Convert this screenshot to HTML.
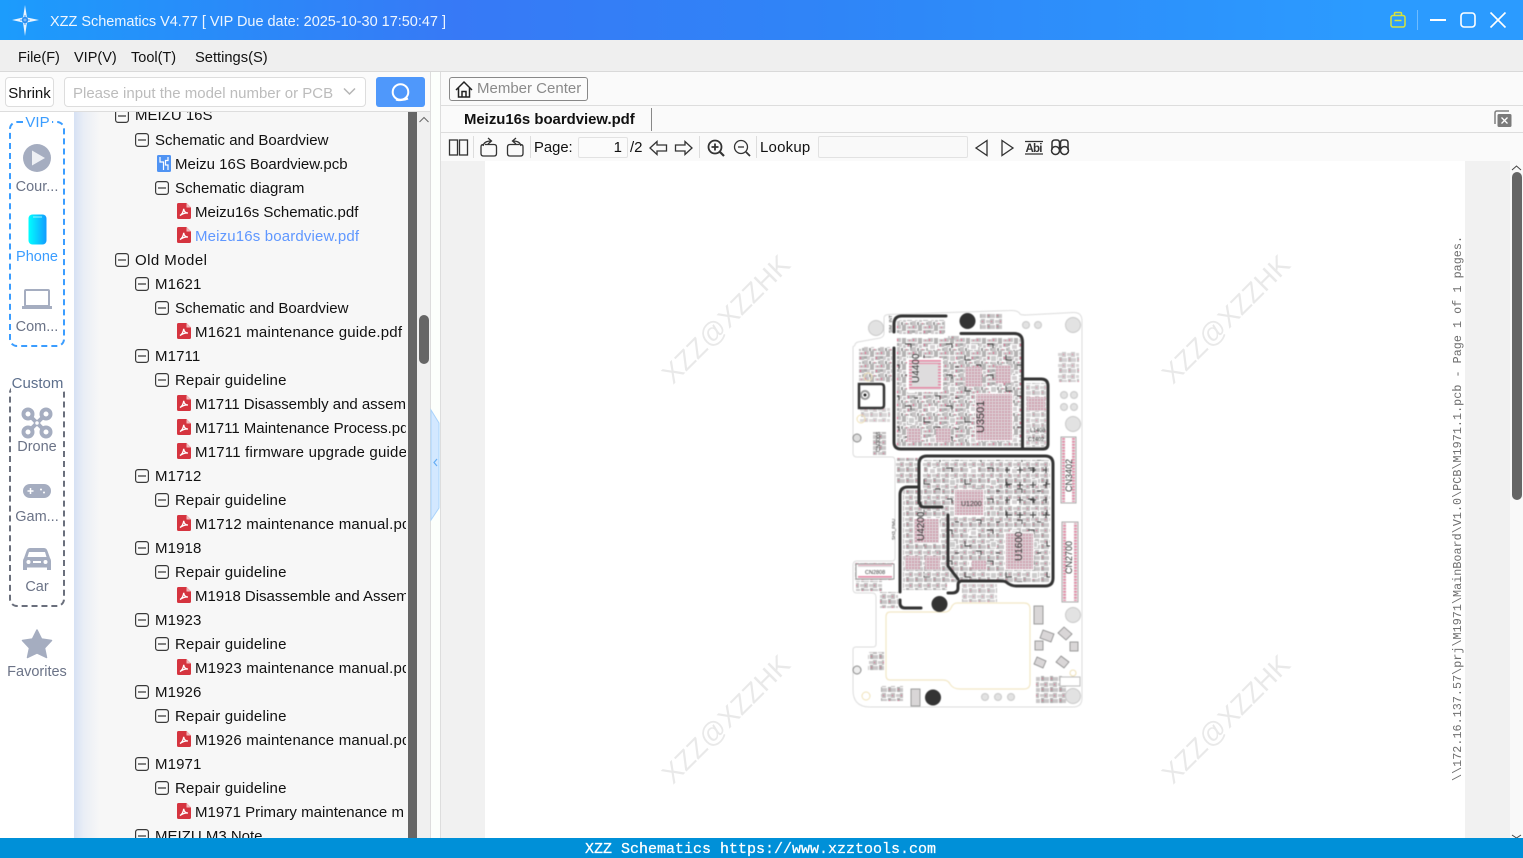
<!DOCTYPE html>
<html><head><meta charset="utf-8"><title>XZZ Schematics</title>
<style>
html,body{margin:0;padding:0;width:1523px;height:858px;overflow:hidden;background:#fff}
body{position:relative;font:15px/20px "Liberation Sans",sans-serif;color:#111}
.a{position:absolute;white-space:nowrap}
.t{position:absolute;white-space:nowrap;height:24px;line-height:24px;font-size:15px;margin-top:1px;color:#111}
.s{position:absolute;left:0;width:74px;text-align:center;font-size:14.500px;color:#6b7387;line-height:18px;margin-top:1px}
svg{position:absolute;left:0;top:0;overflow:hidden}
</style></head><body>
<div class="a" style="left:0;top:0;width:1523px;height:40px;background:linear-gradient(90deg,#1c9cfc 0,#3779f6 30%,#2f85f7 55%,#2b9bff 90%)"></div>
<div class="a" style="left:50px;top:12px;font-size:14.500px;line-height:20px;color:#eef6ff;letter-spacing:-.02px">XZZ Schematics V4.77 [ VIP Due date: 2025-10-30 17:50:47 ]</div>
<div class="a" style="left:0;top:40px;width:1523px;height:31px;background:#efefef;border-bottom:1px solid #d9d9d9"></div>
<div class="a" style="left:18px;top:48px;font-size:14.500px">File(F)</div><div class="a" style="left:74px;top:48px;font-size:14.500px">VIP(V)</div><div class="a" style="left:131px;top:48px;font-size:14.500px">Tool(T)</div><div class="a" style="left:195px;top:48px;font-size:14.700px">Settings(S)</div>

<!-- left toolbar -->
<div class="a" style="left:0;top:72px;width:430px;height:39px;background:#fbfbfb;border-bottom:1px solid #ddd"></div>
<div class="a" style="left:5px;top:77px;width:47px;height:28px;background:#fff;border:1px solid #ddd;border-radius:4px;text-align:center;line-height:31px;font-size:15px">Shrink</div>
<div class="a" style="left:64px;top:77px;width:300px;height:28px;background:#fff;border:1px solid #ddd;border-radius:4px;line-height:31px;color:#bcbcbc;text-indent:8px;font-size:15px">Please input the model number or PCB</div>
<div class="a" style="left:376px;top:77px;width:49px;height:30px;background:#4f98fb;border-radius:3px"></div>

<!-- tree panel -->
<div class="a" style="left:74px;top:112px;width:334px;height:726px;background:linear-gradient(90deg,#d6e1f4 0,#eaeef6 10px,#f7f7f7 26px)"></div>
<div class="a" style="left:408px;top:112px;width:9px;height:726px;background:#666"></div>
<div class="a" style="left:417px;top:112px;width:13px;height:726px;background:#f0f0f0"></div>
<div class="a" style="left:419px;top:315px;width:10px;height:49px;background:#666;border-radius:5px"></div>
<div class="a" style="left:430px;top:72px;width:9px;height:766px;background:#fcfffc;border-left:1px solid #ddd;border-right:1px solid #ddd"></div>
<div id="tree" class="a" style="left:0;top:112px;width:406px;height:726px;overflow:hidden">
<div class="t" style="left:135px;top:-9px">MEIZU 16S</div>
<div class="t" style="left:155px;top:16px">Schematic and Boardview</div>
<div class="t" style="left:175px;top:40px">Meizu 16S Boardview.pcb</div>
<div class="t" style="left:175px;top:64px;letter-spacing:.06px">Schematic diagram</div>
<div class="t" style="left:195px;top:88px">Meizu16s Schematic.pdf</div>
<div class="t" style="left:195px;top:112px;color:#5f97ff;letter-spacing:.15px">Meizu16s boardview.pdf</div>
<div class="t" style="left:135px;top:136px;letter-spacing:.45px">Old Model</div>
<div class="t" style="left:155px;top:160px;letter-spacing:.12px">M1621</div>
<div class="t" style="left:175px;top:184px">Schematic and Boardview</div>
<div class="t" style="left:195px;top:208px;letter-spacing:.2px">M1621 maintenance guide.pdf</div>
<div class="t" style="left:155px;top:232px;letter-spacing:.12px">M1711</div>
<div class="t" style="left:175px;top:256px;letter-spacing:.2px">Repair guideline</div>
<div class="t" style="left:195px;top:280px;letter-spacing:-.02px">M1711 Disassembly and assembly</div>
<div class="t" style="left:195px;top:304px;letter-spacing:-.02px">M1711 Maintenance Process.pdf</div>
<div class="t" style="left:195px;top:328px;letter-spacing:.2px">M1711 firmware upgrade guide.pdf</div>
<div class="t" style="left:155px;top:352px;letter-spacing:.12px">M1712</div>
<div class="t" style="left:175px;top:376px;letter-spacing:.2px">Repair guideline</div>
<div class="t" style="left:195px;top:400px;letter-spacing:.2px">M1712 maintenance manual.pdf</div>
<div class="t" style="left:155px;top:424px;letter-spacing:.12px">M1918</div>
<div class="t" style="left:175px;top:448px;letter-spacing:.2px">Repair guideline</div>
<div class="t" style="left:195px;top:472px;letter-spacing:-.02px">M1918 Disassemble and Assem</div>
<div class="t" style="left:155px;top:496px;letter-spacing:.12px">M1923</div>
<div class="t" style="left:175px;top:520px;letter-spacing:.2px">Repair guideline</div>
<div class="t" style="left:195px;top:544px;letter-spacing:.2px">M1923 maintenance manual.pdf</div>
<div class="t" style="left:155px;top:568px;letter-spacing:.12px">M1926</div>
<div class="t" style="left:175px;top:592px;letter-spacing:.2px">Repair guideline</div>
<div class="t" style="left:195px;top:616px;letter-spacing:.2px">M1926 maintenance manual.pdf</div>
<div class="t" style="left:155px;top:640px;letter-spacing:.12px">M1971</div>
<div class="t" style="left:175px;top:664px;letter-spacing:.2px">Repair guideline</div>
<div class="t" style="left:195px;top:688px;letter-spacing:.02px">M1971 Primary maintenance m</div>
<div class="t" style="left:155px;top:712px">MEIZU M3 Note</div>
</div>

<!-- sidebar labels -->
<div class="a" style="left:9px;top:121px;width:52px;height:222px;border:2px dashed #3b9dff;border-radius:8px"></div>
<div class="a" style="left:23px;top:114px;width:29px;height:17px;background:#fff;text-align:center;color:#3b9dff;font-size:15px;line-height:17px">VIP</div>
<div class="s" style="top:177px">Cour...</div>
<div class="s" style="top:247px;color:#3b9dff">Phone</div>
<div class="s" style="top:317px">Com...</div>
<div class="a" style="left:9px;top:385px;width:52px;height:218px;border:2px dashed #6a6f7c;border-radius:8px"></div>
<div class="a" style="left:11px;top:375px;width:53px;height:16px;background:#fff;text-align:center;color:#5d6f8c;font-size:15px;line-height:17px">Custom</div>
<div class="s" style="top:437px">Drone</div>
<div class="s" style="top:507px">Gam...</div>
<div class="s" style="top:577px">Car</div>
<div class="s" style="top:662px">Favorites</div>

<!-- right panel -->
<div class="a" style="left:441px;top:72px;width:1082px;height:33px;background:#fafafa;border-bottom:1px solid #ddd"></div>
<div class="a" style="left:441px;top:106px;width:1082px;height:26px;background:#fafafa;border-bottom:1px solid #ddd"></div>
<div class="a" style="left:441px;top:133px;width:1082px;height:28px;background:#fafafa"></div>
<div class="a" style="left:449px;top:77px;width:137px;height:22px;border:1px solid #888;border-radius:3px;background:#fbfbfb"></div>
<div class="a" style="left:477px;top:79px;color:#8a8a8a;font-size:15px">Member Center</div>
<div class="a" style="left:464px;top:110px;font-weight:bold;font-size:14.900px;color:#111">Meizu16s boardview.pdf</div>
<div class="a" style="left:651px;top:108px;width:1px;height:23px;background:#888"></div>
<div class="a" style="left:534px;top:138px;font-size:14.800px">Page:</div>
<div class="a" style="left:578px;top:137px;width:48px;height:19px;border:1px solid #e2e2e2;border-radius:2px;background:#fbfbfb;text-align:right;line-height:20px;font-size:15px"><span style="margin-right:5px">1</span></div>
<div class="a" style="left:630px;top:138px;font-size:15px">/2</div>
<div class="a" style="left:760px;top:138px;font-size:15px;letter-spacing:.2px">Lookup</div>
<div class="a" style="left:818px;top:136px;width:148px;height:20px;border:1px solid #e2e2e2;border-radius:2px;background:#f9f9f9"></div>
<div class="a" style="left:473px;top:136px;width:1px;height:22px;background:#ddd"></div>
<div class="a" style="left:530px;top:136px;width:1px;height:22px;background:#ddd"></div>
<div class="a" style="left:699px;top:136px;width:1px;height:22px;background:#ddd"></div>
<div class="a" style="left:756px;top:136px;width:1px;height:22px;background:#ddd"></div>
<div class="a" style="left:441px;top:161px;width:1069px;height:677px;background:#f1f1f1"></div>
<div class="a" style="left:485px;top:161px;width:980px;height:677px;background:#fff"></div>
<div class="a" style="left:1510px;top:161px;width:13px;height:677px;background:#f9f9f9"></div>
<div class="a" style="left:1512px;top:172px;width:10px;height:328px;background:#666;border-radius:5px"></div>

<!-- icons, document -->
<svg width="1523" height="858" viewBox="0 0 1523 858">
<defs>
<clipPath id="tc"><rect x="74" y="112" width="334" height="726"/></clipPath>
<pattern id="p1" width="16" height="13" patternUnits="userSpaceOnUse">
<rect x="0" y="0" width="5" height="4" fill="#c2bfc0"/><rect x="1" y="1" width="1" height="2" fill="#e8698e"/><rect x="6" y="0" width="4" height="6" fill="#b4b3b3"/><rect x="11" y="1" width="5" height="3" fill="#cbc8c9"/><rect x="13" y="2" width="1" height="1" fill="#e8698e"/><rect x="0" y="5" width="3" height="3" fill="#aaa"/><rect x="3" y="5" width="3" height="4" fill="#cfcccd"/><rect x="11" y="5" width="5" height="4" fill="#b9b7b8"/><rect x="12" y="6" width="1" height="2" fill="#e8698e"/><rect x="7" y="7" width="3" height="3" fill="#c8c6c7"/><rect x="0" y="9" width="4" height="4" fill="#c6c3c4"/><rect x="5" y="10" width="2" height="3" fill="#999"/><rect x="8" y="11" width="5" height="2" fill="#bdbbbc"/><rect x="10" y="11" width="1" height="1" fill="#e8698e"/><rect x="14" y="10" width="2" height="3" fill="#b2b2b2"/>
</pattern>
<pattern id="p3" width="9" height="11" patternUnits="userSpaceOnUse">
<rect x="0" y="0" width="4" height="5" fill="#bfbcbd"/><rect x="1" y="2" width="1" height="1" fill="#e8698e"/><rect x="5" y="1" width="4" height="3" fill="#cdcbcc"/><rect x="0" y="6" width="5" height="4" fill="#c8c6c7"/><rect x="6" y="5" width="3" height="5" fill="#aeadad"/><rect x="7" y="7" width="1" height="1" fill="#e8698e"/>
</pattern>
<pattern id="mk" width="41" height="31" patternUnits="userSpaceOnUse">
<path d="M3 3H9V7M22 14V19H28M33 24H38V28M12 26H16" fill="none" stroke="#444" stroke-width=".9"/><rect x="26" y="3" width="9" height="6" fill="#fff"/><rect x="6" y="14" width="7" height="7" fill="#fff"/><rect x="28" y="4" width="5" height="4" fill="#d4d1d2"/><rect x="7" y="15" width="5" height="5" fill="#ccc"/>
</pattern>
<pattern id="cr" width="13" height="15" patternUnits="userSpaceOnUse"><path d="M3 5H9M6 2V8" stroke="#444" stroke-width="1"/></pattern>
<pattern id="bga" width="3" height="3" patternUnits="userSpaceOnUse"><rect width="3" height="3" fill="#dcd4d7"/><rect x="0" y="0" width="2" height="2" fill="#cf9eae"/></pattern>
<pattern id="pin" width="3" height="3" patternUnits="userSpaceOnUse"><rect width="3" height="3" fill="#ddd"/><rect x="0" y="0" width="3" height="1.600" fill="#e58aa6"/></pattern>
<symbol id="pdf" viewBox="0 0 14 16"><path d="M1.500 0H9.500L14 4.500V14.500A1.500 1.500 0 0 1 12.500 16H1.500A1.500 1.500 0 0 1 0 14.500V1.500A1.500 1.500 0 0 1 1.500 0Z" fill="#d5343f"/><path d="M9.500 0V4.500H14Z" fill="#f2b7bb"/><path d="M3 12.500C5 11.500 6.500 8.500 6.700 5.800C7 8.500 8.500 10 11 10C8.500 9.800 5.800 10.500 3 12.500Z" fill="none" stroke="#fff" stroke-width="1.300"/></symbol>
<symbol id="mn" viewBox="0 0 14 14"><rect x=".6" y=".6" width="12.800" height="12.800" rx="2.500" fill="#fafafa" stroke="#3a3a3a" stroke-width="1.200"/><path d="M3 7H11" stroke="#333" stroke-width="1.200"/></symbol>
<linearGradient id="ph" x1="0" x2="1"><stop offset="0" stop-color="#0ff"/><stop offset="1" stop-color="#129bff"/></linearGradient>
</defs>

<!-- title logo -->
<path d="M25 5L27 17.500L39 20L27 22.500L25 36L23 22.500L12 20L23 17.500Z" fill="#e8f4ff"/><circle cx="25" cy="20" r="3.200" fill="#2a8df0"/><circle cx="25" cy="20" r="1.400" fill="#fff"/><path d="M20 20H30M25 15V25" stroke="#2a8df0" stroke-width=".8"/>
<!-- window buttons -->
<g fill="none"><rect x="1391" y="15.500" width="14" height="11.500" rx="2" stroke="#d8e33a" stroke-width="1.500"/><path d="M1394.500 15.500V13.500Q1394.500 12.500 1395.500 12.500H1400.500Q1401.500 12.500 1401.500 13.500V15.500M1394.500 20.500H1401.500" stroke="#d8e33a" stroke-width="1.500"/>
<path d="M1417.500 10V30" stroke="#6fbcff"/><path d="M1430 20H1446" stroke="#fff" stroke-width="2"/><rect x="1461" y="13" width="14" height="14" rx="3" stroke="#fff" stroke-width="1.600"/><path d="M1490.500 12.500L1505.500 27.500M1505.500 12.500L1490.500 27.500" stroke="#fff" stroke-width="1.600"/></g>
<!-- search bar -->
<path d="M344 88.500L349.500 94L355 88.500" fill="none" stroke="#b5b5b5" stroke-width="1.500"/>
<circle cx="400.500" cy="92" r="7.800" fill="none" stroke="#fff" stroke-width="2"/><path d="M396 99.500Q402 101 408 98.500" fill="none" stroke="#fff" stroke-width="2.200"/>

<!-- sidebar icons -->
<circle cx="37" cy="158" r="14" fill="#a5adc0"/><path d="M32 150.500L45 158L32 165.500Z" fill="#eef0f4"/>
<rect x="28.500" y="214.500" width="18" height="30" rx="4" fill="url(#ph)"/><path d="M33 217H42" stroke="#bff" stroke-width=".8"/>
<rect x="25" y="290" width="24" height="16" rx="1" fill="none" stroke="#a5adc0" stroke-width="2"/><path d="M22 307.500H52" stroke="#a5adc0" stroke-width="3"/>
<g stroke="#a5adc0" fill="none" stroke-width="4"><circle cx="28" cy="414" r="4.500"/><circle cx="46" cy="414" r="4.500"/><circle cx="28" cy="432" r="4.500"/><circle cx="46" cy="432" r="4.500"/><path d="M31 417L43 429M43 417L31 429"/></g><circle cx="37" cy="423" r="2.500" fill="#fff" stroke="#a5adc0" stroke-width="1.500"/>
<rect x="23" y="484" width="28" height="14" rx="7" fill="#a5adc0"/><path d="M27.500 491H33.500M30.500 488V494" stroke="#fff" stroke-width="1.500"/><circle cx="41" cy="489.500" r="1" fill="#fff"/><circle cx="44" cy="492.500" r="1" fill="#fff"/>
<path d="M30 548H44Q46.500 548 47.500 551L50 558Q51 559.500 51 561V570H47V567.500H27V570H23V561Q23 559.500 24 558L26.500 551Q27.500 548 30 548Z" fill="#a5adc0"/><path d="M29 552H45L46.500 557H27.500Z" fill="#fff"/><circle cx="28.500" cy="562" r="2" fill="#fff"/><circle cx="45.500" cy="562" r="2" fill="#fff"/><path d="M33 562H41" stroke="#fff" stroke-width="2"/>
<path d="M37 630L41.500 639L51.500 640.500L44.500 648L46.500 657.500L37 653L27.500 657.500L29.500 648L22.500 640.500L32.500 639Z" fill="#a5adc0" stroke="#a5adc0" stroke-width="1.500" stroke-linejoin="round"/>

<!-- tree icons -->
<g id="tg" clip-path="url(#tc)">
<use href="#mn" x="115" y="109" width="14" height="14"/>
<use href="#mn" x="135" y="133" width="14" height="14"/>
<use href="#mn" x="155" y="181" width="14" height="14"/>
<use href="#mn" x="115" y="253" width="14" height="14"/>
<use href="#mn" x="135" y="277" width="14" height="14"/>
<use href="#mn" x="155" y="301" width="14" height="14"/>
<use href="#mn" x="135" y="349" width="14" height="14"/>
<use href="#mn" x="155" y="373" width="14" height="14"/>
<use href="#mn" x="135" y="469" width="14" height="14"/>
<use href="#mn" x="155" y="493" width="14" height="14"/>
<use href="#mn" x="135" y="541" width="14" height="14"/>
<use href="#mn" x="155" y="565" width="14" height="14"/>
<use href="#mn" x="135" y="613" width="14" height="14"/>
<use href="#mn" x="155" y="637" width="14" height="14"/>
<use href="#mn" x="135" y="685" width="14" height="14"/>
<use href="#mn" x="155" y="709" width="14" height="14"/>
<use href="#mn" x="135" y="757" width="14" height="14"/>
<use href="#mn" x="155" y="781" width="14" height="14"/>
<use href="#mn" x="135" y="829" width="14" height="14"/>
<use href="#pdf" x="177" y="203" width="14" height="16"/>
<use href="#pdf" x="177" y="227" width="14" height="16"/>
<use href="#pdf" x="177" y="323" width="14" height="16"/>
<use href="#pdf" x="177" y="395" width="14" height="16"/>
<use href="#pdf" x="177" y="419" width="14" height="16"/>
<use href="#pdf" x="177" y="443" width="14" height="16"/>
<use href="#pdf" x="177" y="515" width="14" height="16"/>
<use href="#pdf" x="177" y="587" width="14" height="16"/>
<use href="#pdf" x="177" y="659" width="14" height="16"/>
<use href="#pdf" x="177" y="731" width="14" height="16"/>
<use href="#pdf" x="177" y="803" width="14" height="16"/>
</g>
<rect x="157" y="155" width="14" height="17" rx="1.500" fill="#4f93f3"/><path d="M160 157V162H163.500V170M168 157V160.500H165.500V165H168V170" fill="none" stroke="#fff" stroke-width="1.200"/>
<path d="M419.500 122L424 117.500L428.500 122" fill="none" stroke="#666" stroke-width="1"/>
<path d="M431 410L439 423V508L431 520Z" fill="#d3e8ff" stroke="#a9d3fb" stroke-width="1"/><path d="M437 459L434 462.500L437 466" fill="none" stroke="#66aef5" stroke-width="1.200"/>

<!-- right header icons -->
<path d="M456 90L464 82L472 90M458.500 88V97H469.500V88M462 97V91.500H466V97" fill="none" stroke="#222" stroke-width="1.500"/>
<path d="M1495 124V113Q1495 111 1497 111H1509" fill="none" stroke="#808080" stroke-width="1.500"/><rect x="1497.500" y="114" width="14" height="13" rx="1.500" fill="#7a7a7a"/><path d="M1501.500 117.500L1507.500 123.500M1507.500 117.500L1501.500 123.500" stroke="#fff" stroke-width="1.300"/>
<!-- pdf toolbar -->
<g fill="none" stroke="#333" stroke-width="1.300">
<rect x="449.500" y="140" width="8" height="15"/><rect x="459.500" y="140" width="8" height="15"/>
<path d="M485 144.500H494Q496.500 144.500 496.500 147V153.500Q496.500 156 494 156H483.500Q481 156 481 153.500V147Q481 144.500 483 144.500"/><path d="M483 146Q484 141 491 141M488 138L491.500 141L488 144"/>
<path d="M519.500 144.500H510Q507.500 144.500 507.500 147V153.500Q507.500 156 510 156H520.500Q523 156 523 153.500V147Q523 144.500 521 144.500"/><path d="M521 146Q520 141 513 141M516 138L512.500 141L516 144"/>
<path d="M650 148L657 141.500V145H666.500V151H657V154.500Z"/><path d="M692 148L685 141.500V145H675.500V151H685V154.500Z"/>
<circle cx="715" cy="147" r="6.500" stroke-width="1.800"/><path d="M720 152L724 156" stroke-width="2.200"/><path d="M711.500 147H718.500M715 143.500V150.500" stroke-width="1.800"/>
<circle cx="741" cy="147" r="6.500"/><path d="M746 152L750 156" stroke-width="1.800"/><path d="M738 147H744"/>
<path d="M987 140.500L976 148L987 155.500Z"/><path d="M1002 140.500L1013 148L1002 155.500Z"/>
<path d="M1025 141.500H1043M1025 154H1043"/>
<path d="M1052 150V143Q1052 140 1055 140H1057Q1059.500 140 1059.500 143V150M1060.500 150V143Q1060.500 140 1063 140H1065.500Q1068 140 1068 143V150M1059.500 145H1060.500" stroke-width="1.500"/><circle cx="1055.500" cy="150.500" r="4" stroke-width="1.500"/><circle cx="1064.500" cy="150.500" r="4" stroke-width="1.500"/>
</g>
<text x="1025.500" y="152" font-family="Liberation Sans,sans-serif" font-size="11.500" font-weight="bold" fill="#333" textLength="17">Abi</text>
<path d="M1512 170L1516.500 166L1521 170" fill="none" stroke="#444"/><path d="M1512 835L1516.500 838" fill="none" stroke="#444"/><path d="M1521 835L1516.500 838" fill="none" stroke="#444"/>

<!-- watermarks -->
<g font-family="Liberation Sans,sans-serif" font-size="27" fill="#e9e9e9">
<text transform="translate(673,385) rotate(-45)" textLength="168">XZZ@XZZHK</text>
<text transform="translate(1173,385) rotate(-45)" textLength="168">XZZ@XZZHK</text>
<text transform="translate(673,785) rotate(-45)" textLength="168">XZZ@XZZHK</text>
<text transform="translate(1173,785) rotate(-45)" textLength="168">XZZ@XZZHK</text>
</g>
<text transform="translate(1461,781) rotate(-90)" font-family="Liberation Mono,monospace" font-size="11.700" fill="#6e6e6e" textLength="545">\\172.16.137.57\prj\M1971\MainBoard\V1.0\PCB\M1971.1.pcb - Page 1 of 1 pages.</text>

<!-- PCB -->
<g style="filter:blur(.4px)">
<path d="M855 345Q855 343 858 342L880 338Q884 337 884 333V318Q884 315 888 314.500L1010 310.500Q1018 310 1020 314Q1021 315 1026 315L1073 312.500Q1082 312 1082 321V698Q1082 707 1073 707H870Q853 707 853 690V650Q853 647 856 647H873Q876 647 876 644V597Q876 593 872 593H857Q853 593 853 589V565Q853 561 857 561H892Q895 561 895 558V461Q895 457 892 457H857Q853 457 853 453V347Z" fill="#fff" stroke="#dcdcdc"/>
<path d="M890 612H945Q949 612 951 608Q953 603 957 603H1024Q1030 603 1030 609V683Q1030 689 1024 689H960Q953 689 950 684Q948 680 943 680H890Q886 680 886 675V617Q886 612 890 612Z" fill="none" stroke="#f3e8c6" stroke-width="1.200"/>
<!-- dense fills -->
<rect x="897" y="338" width="124" height="108" fill="url(#p1)"/>
<rect x="897" y="338" width="124" height="108" fill="url(#mk)"/>
<rect x="923" y="460" width="127" height="122" fill="url(#p3)"/>
<rect x="923" y="460" width="127" height="122" fill="url(#mk)"/>
<rect x="1005" y="465" width="42" height="62" fill="url(#cr)"/>
<rect x="903" y="490" width="44" height="100" fill="url(#p3)"/>
<rect x="859" y="347" width="33" height="35" fill="url(#p1)"/>
<rect x="1026" y="383" width="20" height="64" fill="url(#p3)" opacity=".8"/>
<rect x="897" y="320" width="48" height="14" fill="url(#p1)"/>
<rect x="948" y="336" width="12" height="4" fill="url(#p3)"/>
<rect x="980" y="314" width="22" height="16" fill="url(#p3)"/>
<rect x="1058" y="352" width="21" height="30" fill="url(#p3)" opacity=".8"/>
<rect x="873" y="432" width="13" height="23" fill="url(#p3)"/>
<rect x="860" y="408" width="30" height="14" fill="url(#p3)" opacity=".7"/>
<rect x="896" y="458" width="22" height="26" fill="url(#p3)"/>
<rect x="855" y="563" width="38" height="17" fill="url(#p3)"/>
<rect x="856" y="581" width="26" height="10" fill="url(#p3)"/>
<rect x="880" y="592" width="18" height="16" fill="url(#p3)"/>
<rect x="962" y="584" width="35" height="18" fill="url(#p3)" opacity=".8"/>
<rect x="1036" y="676" width="30" height="28" fill="url(#p3)"/>
<rect x="868" y="652" width="16" height="18" fill="url(#p3)"/>
<rect x="881" y="686" width="22" height="15" fill="url(#p3)"/>
<!-- chips -->
<rect x="907" y="358" width="36" height="34" fill="#fff"/><rect x="909" y="360" width="32" height="30" fill="url(#pin)"/><rect x="912" y="364" width="26" height="22" fill="#dedcdd"/>
<rect x="975" y="393" width="38" height="48" fill="#fff"/><rect x="976" y="394" width="36" height="46" fill="url(#bga)"/>
<rect x="965" y="367" width="17" height="20" fill="url(#bga)"/><rect x="996" y="365" width="15" height="18" fill="url(#bga)"/>
<rect x="907" y="428" width="14" height="14" fill="url(#bga)"/><rect x="936" y="428" width="15" height="14" fill="url(#bga)"/>
<rect x="1027" y="397" width="18" height="14" fill="url(#bga)"/>
<rect x="954" y="489" width="30" height="27" fill="#fff"/><rect x="955" y="490" width="28" height="25" fill="url(#bga)"/>
<rect x="1005" y="532" width="29" height="38" fill="#fff"/><rect x="1006" y="533" width="27" height="36" fill="url(#bga)"/>
<rect x="913" y="518" width="27" height="26" fill="#fff"/><rect x="914" y="519" width="25" height="24" fill="url(#bga)"/>
<rect x="905" y="556" width="15" height="14" fill="url(#bga)"/><rect x="925" y="556" width="15" height="14" fill="url(#bga)"/>
<rect x="972" y="560" width="14" height="10" fill="url(#bga)"/>
<g stroke="#aaa" stroke-width="1" fill="#fff"><rect x="1061" y="437" width="15" height="66"/><rect x="1062" y="522" width="16" height="80"/></g>
<rect x="1062" y="438" width="3" height="64" fill="url(#pin)"/><rect x="1072" y="438" width="3" height="64" fill="url(#pin)"/>
<rect x="1063" y="523" width="3" height="78" fill="url(#pin)"/><rect x="1074" y="523" width="3" height="78" fill="url(#pin)"/>
<rect x="856" y="564" width="38" height="15" fill="#fff" stroke="#999"/><rect x="858" y="565" width="34" height="2" fill="url(#pin)"/><rect x="858" y="576" width="34" height="2" fill="url(#pin)"/>
<!-- shields -->
<g fill="none" stroke="#333" stroke-width="3" stroke-linecap="round">
<path d="M946 316H902Q894 316 894 324V332"/>
<path d="M894 348V442Q894 449 901 449H1043Q1048 449 1048 444V386Q1048 379 1041 379H1023"/>
<path d="M961 333.500H1014Q1022.500 333.500 1022.500 342V449"/>
<path d="M859 384H881Q884 384 884 387V405Q884 408 881 408H859Z" stroke-width="2.500"/>
<path d="M919 503V464Q919 456 927 456H1045Q1053 456 1053 464V578Q1053 586 1045 586H1016Q1011 586 1006 582Q1005 581 1000 581H962Q958 581 958 585V588Q958 593 952 593H948"/>
<path d="M920 503Q920 507 924 507H942"/>
<path d="M948 515V566L958 579"/>
<path d="M918 487H908Q900 487 900 495V592"/>
<path d="M900 600V603Q900 608 905 608H921"/>
</g>
<!-- holes -->
<circle cx="967.500" cy="321" r="8" fill="#333"/><circle cx="939.500" cy="604" r="8" fill="#333"/><circle cx="933" cy="697.500" r="8" fill="#333"/>
<g fill="#e2e2e2" stroke="#c9c9c9"><circle cx="876" cy="328" r="7.500"/><circle cx="1073" cy="325" r="7.500"/><circle cx="1073" cy="424" r="7.500"/><circle cx="1073" cy="615" r="7.500"/><circle cx="1073" cy="696" r="7.500"/><circle cx="1026" cy="325" r="3.500"/><circle cx="1038" cy="325" r="3.500"/><circle cx="985" cy="697" r="3.500"/><circle cx="998" cy="697" r="3.500"/><circle cx="1011" cy="697" r="3.500"/><circle cx="1064" cy="395" r="3.500"/><circle cx="1074" cy="395" r="3.500"/><circle cx="1064" cy="407" r="3.500"/><circle cx="1074" cy="407" r="3.500"/></g>
<g fill="none" stroke="#f0e2b8"><circle cx="868" cy="377" r="4"/><circle cx="861" cy="419" r="4"/><circle cx="866" cy="696" r="4"/><circle cx="1073" cy="673" r="3"/></g>
<circle cx="865" cy="395" r="4" fill="none" stroke="#999" stroke-width="2"/><circle cx="865" cy="395" r="1.500" fill="#222"/>
<circle cx="857" cy="438" r="4" fill="#ddd" stroke="#888"/><circle cx="857" cy="670" r="4" fill="#eee" stroke="#888"/>
<!-- labels -->
<g font-family="Liberation Sans,sans-serif" fill="#333" font-size="9">
<text transform="translate(919,383) rotate(-90)" font-size="10">U4400</text>
<text transform="translate(984,433) rotate(-90)" font-size="11">U3501</text>
<text transform="translate(924,541) rotate(-90)" font-size="10">U4200</text>
<text transform="translate(1022,561) rotate(-90)" font-size="10">U1600</text>
<text x="961" y="506" font-size="7">U1200</text>
<text transform="translate(1072,492) rotate(-90)" font-size="9">CN3402</text>
<text transform="translate(1072,574) rotate(-90)" font-size="9">CN2700</text>
<text x="865" y="574" font-size="5.500">CN2808</text>
<text transform="translate(880,452) rotate(-90)" font-size="5.500">CN3008</text>
<text x="1030" y="432" font-size="5.500">L1408</text><text x="1028" y="441" font-size="5.500">C1402</text>
<text transform="translate(892,333) rotate(-90)" font-size="4.500">SIM_INT</text>
<text transform="translate(895,540) rotate(-90)" font-size="4.500">SH3_PMU</text>
</g>
<!-- edge parts -->
<g fill="#d9d6d7" stroke="#888" stroke-width=".8"><rect x="1034" y="606" width="9" height="18"/><path d="M1043 630L1054 634L1051 642L1040 638Z"/><path d="M1064 627L1072 634L1066 640L1058 633Z"/><path d="M1037 657L1046 661L1043 668L1034 664Z"/><path d="M1061 656L1069 662L1064 668L1056 662Z"/><rect x="1035" y="641" width="8" height="9"/><rect x="1070" y="642" width="8" height="9"/><rect x="911" y="689" width="9" height="17"/></g>
<rect x="1060" y="677" width="20" height="9" fill="#fff" stroke="#bbb"/>
</g>
</svg>

<div class="a" style="left:0;top:838px;width:1523px;height:20px;background:#0090d8"></div>
<div class="a" style="left:585px;top:840px;color:#fff;font:15px/20px 'Liberation Mono',monospace;-webkit-text-stroke:.25px #fff">XZZ Schematics https://www.xzztools.com</div>
</body></html>
